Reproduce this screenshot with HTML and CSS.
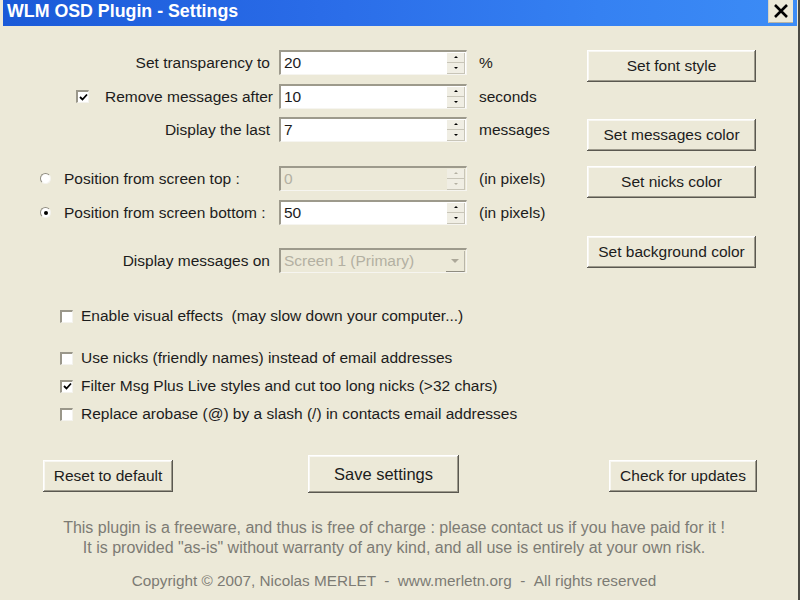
FILE: index.html
```html
<!DOCTYPE html>
<html>
<head>
<meta charset="utf-8">
<link rel="stylesheet" href="styles.css">
</head>
<body>
<div class="window">
  <div class="titlebar">
    <span class="title">WLM OSD Plugin - Settings</span>
    <span class="close"><svg width="16" height="14" viewBox="0 0 16 14"><path d="M2 1 L14 13 M14 1 L2 13" stroke="#000" stroke-width="2.6" fill="none"/></svg></span>
  </div>
  <div class="body">
    <div class="top">
      <div class="left">
        <div class="row r1">
          <div class="lbl lbl-right">Set transparency to</div>
          <div class="spin"><span class="val">20</span><span class="arrows"><span class="ab"><i class="up"></i></span><span class="ab"><i class="dn"></i></span></span></div>
          <div class="unit">%</div>
        </div>
        <div class="row r2">
          <div class="lbl lbl-check"><span class="cb checked"><svg width="9" height="9" viewBox="0 0 9 9"><path d="M1 4 L3.5 6.5 L8 1.5" stroke="#000" stroke-width="1.8" fill="none"/></svg></span><span class="cbtext">Remove messages after</span></div>
          <div class="spin"><span class="val">10</span><span class="arrows"><span class="ab"><i class="up"></i></span><span class="ab"><i class="dn"></i></span></span></div>
          <div class="unit">seconds</div>
        </div>
        <div class="row r3">
          <div class="lbl lbl-right">Display the last</div>
          <div class="spin"><span class="val">7</span><span class="arrows"><span class="ab"><i class="up"></i></span><span class="ab"><i class="dn"></i></span></span></div>
          <div class="unit">messages</div>
        </div>
        <div class="row r4">
          <div class="lbl lbl-radio"><span class="radio"></span><span class="rtext">Position from screen top :</span></div>
          <div class="spin disabled"><span class="val">0</span><span class="arrows"><span class="ab"><i class="up"></i></span><span class="ab"><i class="dn"></i></span></span></div>
          <div class="unit">(in pixels)</div>
        </div>
        <div class="row r5">
          <div class="lbl lbl-radio"><span class="radio on"><i></i></span><span class="rtext">Position from screen bottom :</span></div>
          <div class="spin"><span class="val">50</span><span class="arrows"><span class="ab"><i class="up"></i></span><span class="ab"><i class="dn"></i></span></span></div>
          <div class="unit">(in pixels)</div>
        </div>
        <div class="row r6">
          <div class="lbl lbl-right">Display messages on</div>
          <div class="combo"><span class="val">Screen 1 (Primary)</span><span class="drop"><i class="dn"></i></span></div>
        </div>
      </div>
      <div class="right">
        <button class="btn b-font">Set font style</button>
        <button class="btn b-msg">Set messages color</button>
        <button class="btn b-nick">Set nicks color</button>
        <button class="btn b-bg">Set background color</button>
      </div>
    </div>
    <div class="checks">
      <div class="crow c1"><span class="cb"></span><span class="ctext">Enable visual effects &nbsp;(may slow down your computer...)</span></div>
      <div class="crow c2"><span class="cb"></span><span class="ctext">Use nicks (friendly names) instead of email addresses</span></div>
      <div class="crow c3"><span class="cb checked"><svg width="9" height="9" viewBox="0 0 9 9"><path d="M1 4 L3.5 6.5 L8 1.5" stroke="#000" stroke-width="1.8" fill="none"/></svg></span><span class="ctext">Filter Msg Plus Live styles and cut too long nicks (&gt;32 chars)</span></div>
      <div class="crow c4"><span class="cb"></span><span class="ctext">Replace arobase (@) by a slash (/) in contacts email addresses</span></div>
    </div>
    <div class="actions">
      <button class="btn a-reset">Reset to default</button>
      <button class="btn a-save">Save settings</button>
      <button class="btn a-check">Check for updates</button>
    </div>
    <div class="footer">
      <div class="fl">This plugin is a freeware, and thus is free of charge : please contact us if you have paid for it !</div>
      <div class="fl">It is provided "as-is" without warranty of any kind, and all use is entirely at your own risk.</div>
      <div class="fl copy">Copyright © 2007, Nicolas MERLET &nbsp;- &nbsp;www.merletn.org &nbsp;- &nbsp;All rights reserved</div>
    </div>
  </div>
</div>
</body>
</html>
```
FILE: styles.css
```css
html, body {
  margin: 0;
  padding: 0;
}
body {
  width: 800px;
  height: 600px;
  overflow: hidden;
  background: #ece9d8;
  font-family: "Liberation Sans", Arial, sans-serif;
  font-size: 15.5px;
  color: #1c1c1c;
}
.window {
  width: 800px;
  height: 600px;
  box-sizing: border-box;
  background: #ece9d8;
  border-right: 2px solid #4a4a44;
  display: flex;
  flex-direction: column;
}
.titlebar {
  height: 26px;
  margin-left: 3px;
  margin-right: 1px;
  background: linear-gradient(to right, #1a5ad8 0%, #2a6ce8 40%, #3581f2 75%, #3c8cf6 100%);
  display: flex;
  align-items: flex-start;
  justify-content: space-between;
  flex-shrink: 0;
}
.title {
  color: #fff;
  font-weight: bold;
  font-size: 17.8px;
  padding-left: 4px;
  padding-top: 1px;
  line-height: 20px;
}
.close {
  width: 25px;
  height: 23px;
  margin-right: 4px;
  box-sizing: border-box;
  background: #ece9d8;
  border-left: 1px solid #d8d4c4;
  border-bottom: 1px solid #b8b4a4;
  display: flex;
  align-items: center;
  justify-content: center;
}
.body {
  display: flex;
  flex-direction: column;
}
.top {
  display: flex;
}
.left {
  width: 587px;
  display: flex;
  flex-direction: column;
}
.row {
  display: flex;
  align-items: center;
  height: 25px;
}
.r1 { margin-top: 24px; }
.r2 { margin-top: 9px; }
.r3 { margin-top: 8px; }
.r4 { margin-top: 24px; }
.r5 { margin-top: 9px; }
.r6 { margin-top: 23px; }
.lbl {
  width: 279px;
  box-sizing: border-box;
  display: flex;
  align-items: center;
  white-space: nowrap;
}
.lbl-right {
  justify-content: flex-end;
  padding-right: 9px;
}
.lbl-check {
  padding-left: 76px;
}
.lbl-check .cbtext {
  margin-left: 16px;
}
.lbl-radio {
  padding-left: 40px;
}
.rtext {
  margin-left: 13px;
}
.spin, .combo {
  width: 188px;
  height: 25px;
  box-sizing: border-box;
  background: #fff;
  border-top: 2px solid #9d9a8c;
  border-left: 2px solid #9d9a8c;
  border-bottom: 1px solid #f6f5f0;
  border-right: 1px solid #f6f5f0;
  display: flex;
  align-items: center;
  justify-content: space-between;
}
.spin .val, .combo .val {
  padding-left: 3px;
}
.spin.disabled, .combo {
  background: #ece9d8;
  color: #b3b0a2;
}
.arrows {
  width: 18px;
  height: 21px;
  margin-right: 1px;
  display: flex;
  flex-direction: column;
  justify-content: space-between;
}
.ab {
  height: 10px;
  background: #f0eee4;
  border-bottom: 1px solid #c8c5b8;
  border-right: 1px solid #c8c5b8;
  display: flex;
  align-items: center;
  justify-content: center;
}
.up {
  display: block;
  width: 0;
  height: 0;
  border-left: 2px solid transparent;
  border-right: 2px solid transparent;
  border-bottom: 2px solid #000;
}
.dn {
  display: block;
  width: 0;
  height: 0;
  border-left: 2px solid transparent;
  border-right: 2px solid transparent;
  border-top: 2px solid #000;
}
.disabled .up { border-bottom-color: #b3b0a2; }
.disabled .dn { border-top-color: #b3b0a2; }
.drop {
  width: 18px;
  height: 20px;
  margin-right: 1px;
  background: #ece9d8;
  border-right: 1px solid #b8b5a8;
  border-bottom: 1px solid #8f8c80;
  display: flex;
  align-items: center;
  justify-content: center;
}
.drop .dn {
  border-left: 4px solid transparent;
  border-right: 4px solid transparent;
  border-top: 4px solid #aca899;
}
.unit {
  margin-left: 12px;
  white-space: nowrap;
}
.cb {
  width: 13px;
  height: 13px;
  box-sizing: border-box;
  background: #fff;
  border-top: 2px solid #9a978a;
  border-left: 2px solid #9a978a;
  border-bottom: 1px solid #f4f3ee;
  border-right: 1px solid #f4f3ee;
  display: flex;
  align-items: center;
  justify-content: center;
  flex-shrink: 0;
}
.radio {
  width: 11px;
  height: 11px;
  box-sizing: border-box;
  border-radius: 50%;
  background: #fff;
  border: 1px solid;
  border-color: #8f8c80 #f4f3ee #f4f3ee #8f8c80;
  display: flex;
  align-items: center;
  justify-content: center;
  flex-shrink: 0;
}
.radio i {
  display: block;
  width: 4px;
  height: 4px;
  border-radius: 50%;
  background: #000;
}
.right {
  display: flex;
  flex-direction: column;
}
.btn {
  width: 169px;
  height: 32px;
  padding: 0;
  border: none;
  background: #ece9d8;
  font-family: "Liberation Sans", Arial, sans-serif;
  font-size: 15.5px;
  color: #1c1c1c;
  box-shadow: inset -1px -1px #5a5850, inset 1px 1px #ffffff, inset -2px -2px #9d9a8c, inset 2px 2px #f8f7f2;
}
.b-font { margin-top: 24px; }
.b-msg { margin-top: 37px; }
.b-nick { margin-top: 15px; }
.b-bg { margin-top: 38px; }
.checks {
  display: flex;
  flex-direction: column;
  padding-left: 60px;
  margin-top: 33px;
}
.crow {
  display: flex;
  align-items: center;
  height: 20px;
  white-space: nowrap;
}
.ctext {
  margin-left: 8px;
}
.c2 { margin-top: 22px; }
.c3 { margin-top: 8px; }
.c4 { margin-top: 8px; }
.actions {
  display: flex;
  align-items: flex-start;
  margin-top: 31px;
  padding-left: 43px;
}
.a-reset {
  width: 130px;
  height: 32px;
  margin-top: 5px;
}
.a-save {
  width: 151px;
  height: 38px;
  margin-left: 135px;
  font-size: 16.5px;
}
.a-check {
  width: 148px;
  height: 32px;
  margin-top: 5px;
  margin-left: 150px;
}
.footer {
  margin-top: 25px;
  display: flex;
  flex-direction: column;
  align-items: center;
  padding-right: 10px;
  color: #7c7b74;
  font-size: 16px;
  line-height: 20px;
}
.fl {
  white-space: nowrap;
}
.copy {
  margin-top: 13px;
  font-size: 15.3px;
}
```
